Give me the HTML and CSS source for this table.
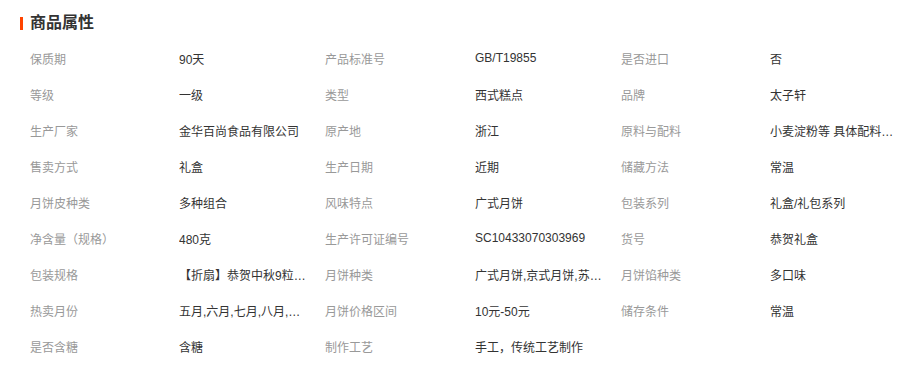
FILE: index.html
```html
<!DOCTYPE html>
<html lang="zh-CN">
<head>
<meta charset="utf-8">
<title>商品属性</title>
<link rel="stylesheet" href="styles.css">
</head>
<body>
<section class="attrs">
  <h2 class="attrs-title"><span class="bar"></span>商品属性</h2>
  <div class="grid">
    <div class="k">保质期</div><div class="v">90天</div>
    <div class="k">产品标准号</div><div class="v">GB/T19855</div>
    <div class="k">是否进口</div><div class="v">否</div>

    <div class="k">等级</div><div class="v">一级</div>
    <div class="k">类型</div><div class="v">西式糕点</div>
    <div class="k">品牌</div><div class="v">太子轩</div>

    <div class="k">生产厂家</div><div class="v">金华百尚食品有限公司</div>
    <div class="k">原产地</div><div class="v">浙江</div>
    <div class="k">原料与配料</div><div class="v">小麦淀粉等 具体配料见包装</div>

    <div class="k">售卖方式</div><div class="v">礼盒</div>
    <div class="k">生产日期</div><div class="v">近期</div>
    <div class="k">储藏方法</div><div class="v">常温</div>

    <div class="k">月饼皮种类</div><div class="v">多种组合</div>
    <div class="k">风味特点</div><div class="v">广式月饼</div>
    <div class="k">包装系列</div><div class="v">礼盒/礼包系列</div>

    <div class="k">净含量（规格）</div><div class="v">480克</div>
    <div class="k">生产许可证编号</div><div class="v">SC10433070303969</div>
    <div class="k">货号</div><div class="v">恭贺礼盒</div>

    <div class="k">包装规格</div><div class="v">【折扇】恭贺中秋9粒装礼盒</div>
    <div class="k">月饼种类</div><div class="v">广式月饼,京式月饼,苏式月饼</div>
    <div class="k">月饼馅种类</div><div class="v">多口味</div>

    <div class="k">热卖月份</div><div class="v">五月,六月,七月,八月,九月</div>
    <div class="k">月饼价格区间</div><div class="v">10元-50元</div>
    <div class="k">储存条件</div><div class="v">常温</div>

    <div class="k">是否含糖</div><div class="v">含糖</div>
    <div class="k">制作工艺</div><div class="v">手工，传统工艺制作</div>
  </div>
</section>
</body>
</html>
```

FILE: styles.css
```css
html, body {
  margin: 0;
  padding: 0;
  background: #fff;
}

body {
  font-family: "Liberation Sans", "Noto Sans CJK SC", sans-serif;
  font-size: 12px;
  color: #333;
}

.attrs {
  padding: 14px 0 0 20px;
}

.attrs-title {
  display: flex;
  align-items: center;
  gap: 7px;
  margin: 0;
  height: 18px;
  font-size: 16px;
  font-weight: bold;
  color: #333;
  line-height: 18px;
}

.bar {
  display: block;
  width: 3px;
  height: 13px;
  background: #ff4400;
}

.grid {
  display: grid;
  grid-template-columns: 149px 146px 150px 146px 149px 1fr;
  grid-auto-rows: 36px;
  align-items: center;
  margin-top: 8px;
  padding-left: 10px;
}

.k {
  color: #999;
  white-space: nowrap;
}

.v {
  color: #333;
  max-width: 128px;
  white-space: nowrap;
  overflow: hidden;
  text-overflow: ellipsis;
}
```
